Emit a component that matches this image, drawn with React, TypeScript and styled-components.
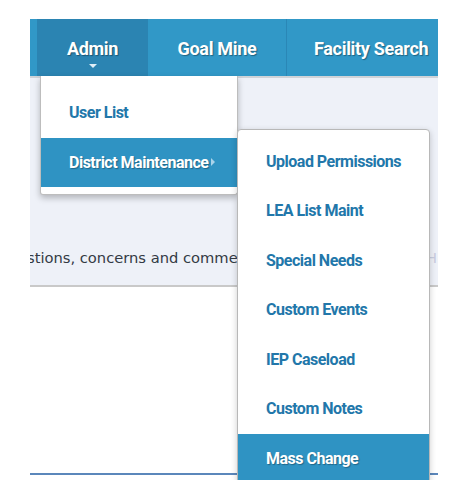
import React from "react";
import styled, { createGlobalStyle } from "styled-components";

const Global = createGlobalStyle`
  html, body { margin: 0; padding: 0; background: #ffffff; overflow: hidden; }
  body { font-family: Roboto, "DejaVu Sans", sans-serif; }
`;

const Page = styled.div`
  width: 459px;
  height: 480px;
  padding: 19px 0 0 30px;
  box-sizing: border-box;
`;

const Frame = styled.div`
  width: 408px;
  position: relative;
`;

const NavBar = styled.nav`
  display: flex;
  height: 57px;
  background: #3198c7;
`;

const NavStub = styled.div`
  width: 7px;
  flex: 0 0 7px;
`;

const NavTab = styled.div<{ $active?: boolean; $w?: number; $last?: boolean }>`
  position: relative;
  flex: ${(p) => (p.$last ? "1 1 auto" : `0 0 ${p.$w}px`)};
  min-width: 0;
  overflow: ${(p) => (p.$last ? "hidden" : "visible")};
  display: flex;
  align-items: center;
  justify-content: ${(p) => (p.$last ? "flex-start" : "center")};
  padding-left: ${(p) => (p.$last ? "27px" : "0")};
  padding-top: 1px;
  box-sizing: border-box;
  background: ${(p) => (p.$active ? "#2b84b2" : "transparent")};
  border-left: ${(p) => (p.$last ? "1px solid #2a87b6" : "none")};
  color: #ffffff;
  font-weight: 700;
  font-size: 18px;
  letter-spacing: -0.3px;
  white-space: nowrap;
  text-shadow: 1px 1px 1px rgba(0, 0, 0, 0.35);
`;

const Caret = styled.span`
  position: absolute;
  left: 50%;
  bottom: 8px;
  margin-left: -4px;
  width: 0;
  height: 0;
  border-left: 4px solid transparent;
  border-right: 4px solid transparent;
  border-top: 4px solid #dfeef7;
`;

const Dropdown = styled.ul`
  position: absolute;
  left: 3px;
  top: 57px;
  width: 198px;
  margin: 0;
  padding: 12px 0 7px;
  list-style: none;
  background: #ffffff;
  border: 1px solid #bdbdbd;
  border-top: none;
  border-radius: 0 0 3px 3px;
  box-shadow: 0 3px 6px rgba(0, 0, 0, 0.25);
  box-sizing: border-box;
  z-index: 5;
  text-shadow: none;
`;

const SubMenu = styled.ul`
  position: absolute;
  left: 100%;
  top: -9px;
  width: 193px;
  margin: 0;
  padding: 7px 0 0;
  list-style: none;
  background: #ffffff;
  border: 1px solid #b8b8b8;
  border-radius: 4px;
  box-shadow: 0 2px 6px rgba(0, 0, 0, 0.2);
  box-sizing: border-box;
  z-index: 6;
`;

const MenuItem = styled.li<{ $hl?: boolean }>`
  position: relative;
  height: 49.5px;
  display: flex;
  align-items: center;
  padding-left: 28px;
  background: ${(p) => (p.$hl ? "#2f93c3" : "transparent")};
  color: ${(p) => (p.$hl ? "#ffffff" : "#2277aa")};
  font-weight: 700;
  font-size: 16px;
  letter-spacing: -0.5px;
  white-space: nowrap;
  text-shadow: ${(p) => (p.$hl ? "1px 1px 1px rgba(0,0,0,0.3)" : "none")};
`;

const Arrow = styled.span`
  display: inline-block;
  margin-left: 3px;
  width: 0;
  height: 0;
  border-top: 4px solid transparent;
  border-bottom: 4px solid transparent;
  border-left: 4px solid #a9d3ea;
`;

const InfoBand = styled.div`
  height: 211px;
  background: #eef1f8;
  border-top: 2px solid #cfd3d8;
  border-bottom: 2px solid #c9c9c9;
  box-sizing: border-box;
  display: flex;
  flex-direction: column;
  justify-content: flex-end;
  padding-bottom: 19px;
  overflow: hidden;
`;

const Message = styled.div`
  display: flex;
  justify-content: space-between;
  font-family: "DejaVu Sans", sans-serif;
  font-size: 14.7px;
  color: #333a44;
  white-space: nowrap;
`;

const Visible = styled.span`
  width: 208px;
  overflow: hidden;
  text-indent: -3px;
`;

const Faint = styled.span`
  color: #c9cde0;
  padding-right: 1px;
`;

const WhiteBand = styled.div`
  height: 186px;
  background: #ffffff;
  border-bottom: 2px solid #5b87bb;
`;

const subItems = [
  "Upload Permissions",
  "LEA List Maint",
  "Special Needs",
  "Custom Events",
  "IEP Caseload",
  "Custom Notes",
  "Mass Change",
];

export default function App() {
  return (
    <>
      <Global />
      <Page>
        <Frame>
          <NavBar>
            <NavStub />
            <NavTab $active $w={111}>
              Admin
              <Caret />
              <Dropdown>
                <MenuItem>User List</MenuItem>
                <MenuItem $hl>
                  District Maintenance
                  <Arrow />
                  <SubMenu>
                    {subItems.map((s) => (
                      <MenuItem key={s} $hl={s === "Mass Change"}>
                        {s}
                      </MenuItem>
                    ))}
                  </SubMenu>
                </MenuItem>
              </Dropdown>
            </NavTab>
            <NavTab $w={138}>Goal Mine</NavTab>
            <NavTab $last>Facility Search</NavTab>
          </NavBar>
          <InfoBand>
            <Message>
              <Visible>stions, concerns and comme</Visible>
              <Faint>H</Faint>
            </Message>
          </InfoBand>
          <WhiteBand />
        </Frame>
      </Page>
    </>
  );
}
